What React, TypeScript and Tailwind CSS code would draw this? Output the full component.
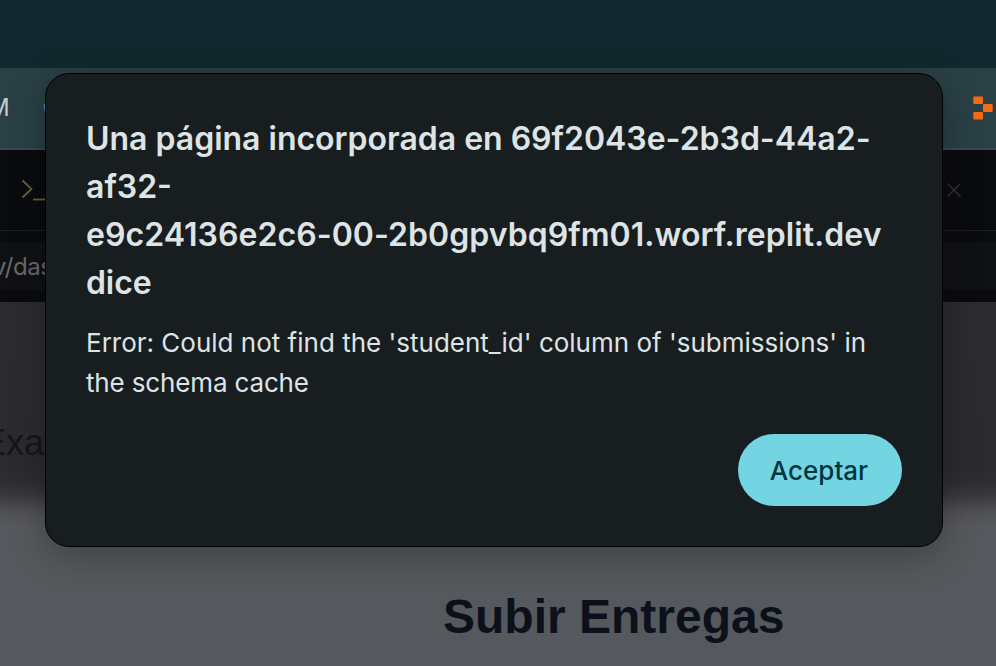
const titleLines = [
  { text: 'Una página incorporada en 69f2043e-2b3d-44a2-', style: 'tracking-[-0.01px]' },
  { text: 'af32-', style: 'tracking-[0px]' },
  { text: 'e9c24136e2c6-00-2b0gpvbq9fm01.worf.replit.dev', style: 'tracking-[0.05px]' },
  { text: 'dice', style: 'tracking-[-0.1px]' },
];

function BookmarksBar() {
  return (
    <div className="flex h-[82px] items-center justify-between border-b-2 border-[#3a474a] bg-[#294045] pr-[3px]">
      <div className="flex items-center text-[24px] leading-[30px] text-[#c3cccd]">
        <span className="-ml-[12px] w-[55px]">M</span>
        <span>C</span>
      </div>
      <svg width="20" height="24" viewBox="0 0 20 24" fill="#f96a16">
        <rect x="0.3" y="0.5" width="9.7" height="7.5" rx="1" />
        <rect x="10" y="8" width="9.7" height="8" rx="1" />
        <rect x="0.3" y="16" width="9.7" height="7.5" rx="1" />
      </svg>
    </div>
  );
}

function EditorTabs() {
  return (
    <div className="flex h-[81px] items-center justify-between border-b border-[#1c1d20] bg-[#0a0b0f] pr-[34px] pl-[20px]">
      <svg width="26" height="24" viewBox="0 0 26 24" fill="none" stroke="#6d6038" strokeWidth="1.8">
        <path d="M2.5 2.5 L11.5 11 L2.5 19.5" />
        <path d="M13 21.5 H26" />
      </svg>
      <svg width="16" height="16" viewBox="0 0 16 16" fill="none" stroke="#2f3033" strokeWidth="1.5">
        <path d="M1.5 1.5 L14.5 14.5 M14.5 1.5 L1.5 14.5" />
      </svg>
    </div>
  );
}

function AddressBar() {
  return (
    <div className="h-[71px] bg-[#0a0b0f] pt-[11px] pb-[12px]">
      <div className="flex h-[48px] items-center bg-[#101114] pt-[2px] text-[24px] tracking-[-0.4px] text-[#69696c]">
        <span className="-ml-[7px]">v/dashboard</span>
      </div>
    </div>
  );
}

function PreviewPage() {
  return (
    <main className="flex h-[364px] flex-col bg-linear-[180deg,#2c2c2f_0px,#2b2b2e_166px,#2f2f32_182px,#3a3a3d_194px,#49494d_204px,#535357_214px,#55585c_222px,#55585d_364px] font-['Liberation_Sans',Arial,sans-serif]">
      <div className="h-[280px] pt-[120px]">
        <span className="-ml-[18px] text-[36px] leading-[42px] text-[#151619]">Examen</span>
      </div>
      <h1 className="pl-[443px] text-[48px] leading-[70px] font-bold text-[#0c101b]">Subir Entregas</h1>
    </main>
  );
}

function AlertDialog() {
  return (
    <div
      role="alertdialog"
      className="absolute top-[73px] left-[45px] flex h-[474px] w-[898px] flex-col rounded-[24px] border border-black bg-[#181d1f] px-[40px] pt-[41px] pb-[40px] text-[#dee4e5] shadow-[0_8px_36px_rgba(0,0,0,0.28)]"
    >
      <h2 className="text-[32px] leading-[48px] font-semibold whitespace-nowrap">
        {titleLines.map((line) => (
          <span key={line.text} className={`block ${line.style}`}>{line.text}</span>
        ))}
      </h2>
      <p className="mt-[16px] text-[26px] leading-[40px] font-[430] whitespace-nowrap">
        <span className="block">Error: Could not find the 'student_id' column of 'submissions' in</span>
        <span className="block tracking-[-0.15px]">the schema cache</span>
      </p>
      <button className="mt-auto h-[72px] w-[164px] self-end rounded-full bg-[#74d5e2] pr-[2px] text-[26px] font-medium text-[#00363d]">
        Aceptar
      </button>
    </div>
  );
}

export default function App() {
  return (
    <div className="relative h-[666px] w-[996px] overflow-hidden bg-[#0a0b0f] font-[Inter,sans-serif]">
      <div className="h-[68px] bg-[#11292e]" />
      <BookmarksBar />
      <EditorTabs />
      <AddressBar />
      <PreviewPage />
      <AlertDialog />
    </div>
  );
}
